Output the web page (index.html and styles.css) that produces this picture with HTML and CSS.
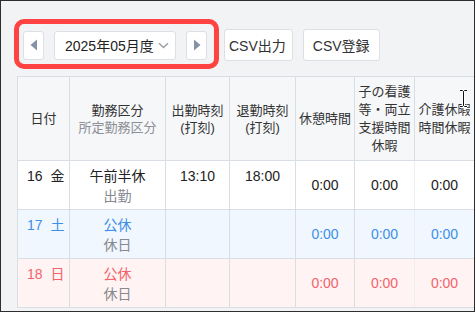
FILE: index.html
```html
<!DOCTYPE html>
<html lang="ja">
<head>
  <meta charset="UTF-8">
  <meta name="viewport" content="width=device-width, initial-scale=1.0">
  <title>勤務表</title>
  <link rel="stylesheet" href="styles.css">
</head>
<body>
  <div class="frame">
    <div class="toolbar">
      <div class="period">
        <button class="arrow-btn" title="前月">
          <svg width="8" height="12" viewBox="0 0 8 12"><path d="M7 0.5 L0.5 6 L7 11.5 Z" fill="#8592a6"/></svg>
        </button>
        <div class="month-select">
          <span>2025年05月度</span>
          <svg width="11" height="7" viewBox="0 0 11 7"><path d="M1 1.2 L5.5 5.5 L10 1.2" fill="none" stroke="#9aa0a8" stroke-width="1.5"/></svg>
        </div>
        <button class="arrow-btn" title="次月">
          <svg width="8" height="12" viewBox="0 0 8 12"><path d="M1 0.5 L7.5 6 L1 11.5 Z" fill="#8592a6"/></svg>
        </button>
      </div>
      <button class="btn btn-export">CSV出力</button>
      <button class="btn">CSV登録</button>
    </div>

    <div class="table-wrap">
      <table class="attendance">
        <colgroup>
          <col style="width:52px">
          <col style="width:96px">
          <col style="width:64px">
          <col style="width:66px">
          <col style="width:59px">
          <col style="width:60px">
          <col style="width:60px">
        </colgroup>
        <thead>
          <tr>
            <th>日付</th>
            <th class="two-line">勤務区分<div class="sub">所定勤務区分</div></th>
            <th class="two-line">出勤時刻<div>(打刻)</div></th>
            <th class="two-line">退勤時刻<div>(打刻)</div></th>
            <th>休憩時間</th>
            <th>子の看護等・両立支援時間休暇</th>
            <th>介護休暇時間休暇</th>
          </tr>
        </thead>
        <tbody>
          <tr>
            <td class="date">16<span class="dow">金</span></td>
            <td class="work">午前半休<div class="sub">出勤</div></td>
            <td class="clock">13:10</td>
            <td class="clock">18:00</td>
            <td class="num">0:00</td>
            <td class="num light">0:00</td>
            <td class="num">0:00</td>
          </tr>
          <tr class="sat">
            <td class="date">17<span class="dow">土</span></td>
            <td class="work">公休<div class="sub">休日</div></td>
            <td class="clock"></td>
            <td class="clock"></td>
            <td class="num">0:00</td>
            <td class="num light">0:00</td>
            <td class="num">0:00</td>
          </tr>
          <tr class="sun">
            <td class="date">18<span class="dow">日</span></td>
            <td class="work">公休<div class="sub">休日</div></td>
            <td class="clock"></td>
            <td class="clock"></td>
            <td class="num">0:00</td>
            <td class="num light">0:00</td>
            <td class="num">0:00</td>
          </tr>
        </tbody>
      </table>
    </div>

    <svg class="cursor" width="9" height="19" viewBox="0 0 9 19">
      <path d="M1 1.5 H3.5 L4.5 2.5 L5.5 1.5 H8 M4.5 2.5 V16.5 M1 17.5 H3.5 L4.5 16.5 L5.5 17.5 H8" fill="none" stroke="#fff" stroke-width="3"/>
      <path d="M1 1.5 H3.5 L4.5 2.5 L5.5 1.5 H8 M4.5 2.5 V16.5 M1 17.5 H3.5 L4.5 16.5 L5.5 17.5 H8" fill="none" stroke="#111" stroke-width="1"/>
    </svg>
  </div>
</body>
</html>
```

FILE: styles.css
```css
body {
  margin: 0;
  font-family: "Liberation Sans", "Noto Sans CJK JP", sans-serif;
  color: #303133;
}
.frame {
  position: relative;
  width: 475px;
  height: 312px;
  box-sizing: border-box;
  border: 1px solid #2e2e2e;
  background-color: #f2f3f5;
  overflow: hidden;
  padding: 28px 0 0 16px;
}
.toolbar {
  display: flex;
  align-items: center;
  gap: 10px;
  height: 32px;
  margin-left: 6px;
}
.period {
  position: relative;
  display: flex;
  align-items: center;
  gap: 10px;
}
/* red highlight drawn over the month switcher */
.period::after {
  content: "";
  position: absolute;
  top: -12px;
  bottom: -9px;
  left: -9px;
  right: -12px;
  border: 5px solid #ff4343;
  border-radius: 10px;
  pointer-events: none;
}
.arrow-btn, .month-select, .btn {
  height: 29px;
  box-sizing: border-box;
  background: #fff;
  border: 1px solid #dcdfe6;
  border-radius: 3px;
}
.arrow-btn {
  width: 21px;
  padding: 0;
  display: flex;
  align-items: center;
  justify-content: center;
}
.month-select {
  width: 122px;
  display: flex;
  align-items: center;
  justify-content: space-between;
  padding: 0 6px 0 10px;
  font-size: 14px;
  color: #222;
}
.btn {
  height: 32px;
  padding: 0 9px;
  font-family: inherit;
  font-size: 14px;
  color: #303133;
  white-space: nowrap;
}
.btn-export {
  margin-left: 7px;
  padding: 0 6px 0 4px;
}
.table-wrap {
  margin-top: 15px;
  overflow: hidden;
}
.attendance {
  border-collapse: collapse;
  table-layout: fixed;
  width: 458px;
  font-size: 13px;
}
.attendance th, .attendance td {
  border: 1px solid #d9dde4;
  text-align: center;
}
.attendance th {
  height: 83px;
  padding: 0 3px;
  background: #f6f7f9;
  font-weight: normal;
  line-height: 18px;
  color: #333;
}
.attendance th.two-line {
  line-height: 17px;
}
.attendance .sub {
  color: #8c8f96;
}
.attendance td {
  height: 49px;
  padding: 5px 4px 0;
  box-sizing: border-box;
  vertical-align: top;
  font-size: 14px;
  line-height: 20px;
  color: #222;
}
.attendance td.date {
  text-align: left;
  padding-left: 9px;
}
.dow {
  margin-left: 8px;
}
.attendance td.num {
  vertical-align: middle;
  padding-top: 0;
}
.attendance td.light {
  border-left-color: #eceef1;
  border-right-color: #eceef1;
}
.attendance tbody tr {
  background: #fff;
}
.attendance tr.sat {
  background: #f1f7fe;
}
.attendance tr.sat td {
  color: #3d8fe9;
}
.attendance tr.sun {
  background: #fff3f3;
}
.attendance tr.sun td {
  color: #f2636b;
}
.attendance tr td .sub {
  color: #86898f;
}
.cursor {
  position: absolute;
  left: 458px;
  top: 88px;
}
```
